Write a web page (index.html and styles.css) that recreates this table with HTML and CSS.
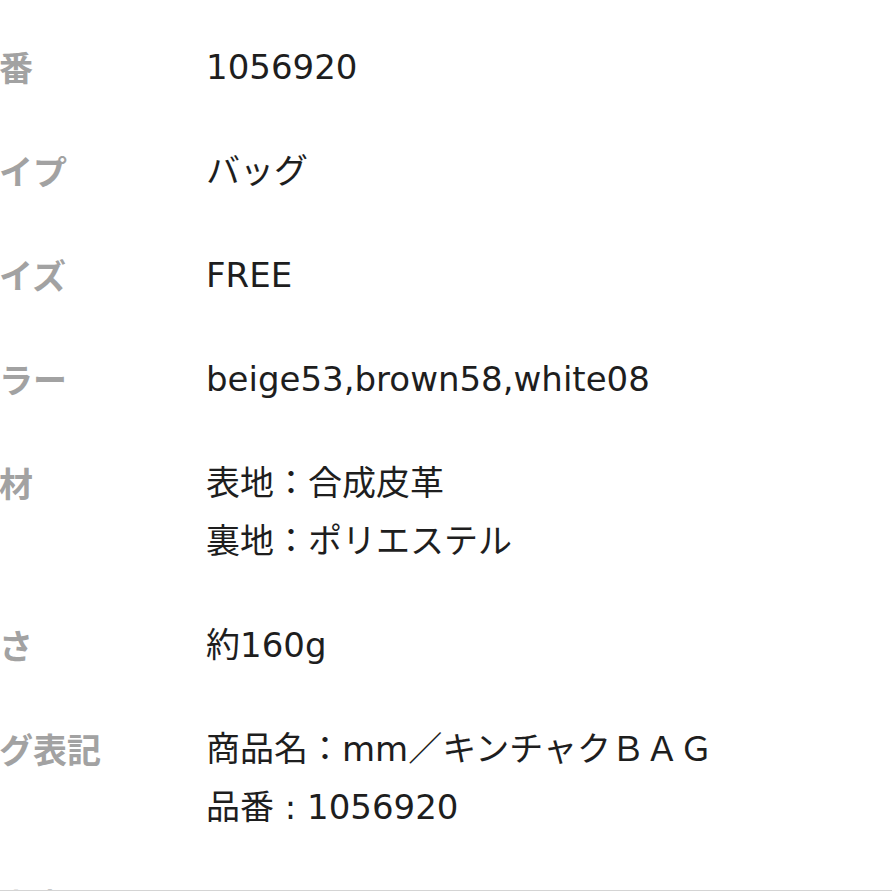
FILE: index.html
```html
<!DOCTYPE html>
<html lang="ja">
<head>
    <meta charset="UTF-8">
    <meta name="viewport" content="width=device-width, initial-scale=1.0">
    <title>商品詳細</title>
    <link rel="stylesheet" href="styles.css">
</head>
<body>

    <dl class="spec">
        <div class="spec-row">
            <dt class="spec-label">品番</dt>
            <dd class="spec-value">1056920</dd>
        </div>
        <div class="spec-row">
            <dt class="spec-label">タイプ</dt>
            <dd class="spec-value">バッグ</dd>
        </div>
        <div class="spec-row">
            <dt class="spec-label">サイズ</dt>
            <dd class="spec-value">FREE</dd>
        </div>
        <div class="spec-row">
            <dt class="spec-label">カラー</dt>
            <dd class="spec-value">beige53,brown58,white08</dd>
        </div>
        <div class="spec-row">
            <dt class="spec-label">素材</dt>
            <dd class="spec-value">表地：合成皮革<br>裏地：ポリエステル</dd>
        </div>
        <div class="spec-row">
            <dt class="spec-label">重さ</dt>
            <dd class="spec-value">約160g</dd>
        </div>
        <div class="spec-row">
            <dt class="spec-label">タグ表記</dt>
            <dd class="spec-value">商品名：mm／キンチャクＢＡＧ<br>品番 : 1056920</dd>
        </div>
        <div class="spec-row">
            <dt class="spec-label">注意事項</dt>
            <dd class="spec-value"></dd>
        </div>
    </dl>

    <div class="bottom-bar"></div>

</body>
</html>
```

FILE: styles.css
```css
body {
    margin: 0;
    overflow: hidden;
    background-color: #fff;
    font-family: "DejaVu Sans", "Noto Sans CJK JP", sans-serif;
    font-size: 34px;
    line-height: 58px;
}

.spec {
    margin: 15px 0 0 -35px;
    padding: 0;
}

.spec-row {
    display: grid;
    grid-template-columns: 241px 1fr;
    padding: 23px 0;
}

.spec-row:last-child {
    padding-top: 17px;
}

.spec-label {
    color: #a2a2a2;
    font-family: "Noto Sans CJK JP", sans-serif;
    font-weight: 700;
}

.spec-value {
    margin: 0;
    color: #1e1e1e;
}

/* 画面下の固定バーの境界線 */
.bottom-bar {
    position: fixed;
    left: 0;
    right: 0;
    bottom: 0;
    height: 1px;
    border-top: 1px solid #d4d4d4;
    background-color: #fff;
}
```
